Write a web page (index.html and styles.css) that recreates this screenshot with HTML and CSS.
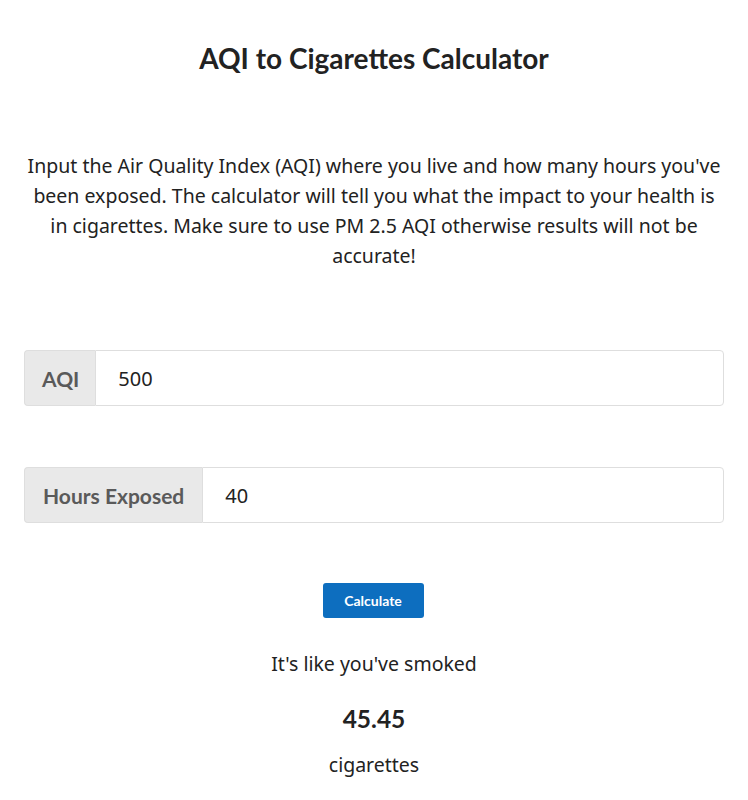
FILE: index.html
```html
<!DOCTYPE html>
<html>
<head>
<meta charset="utf-8">
<link rel="stylesheet" href="styles.css">
</head>
<body>
<main class="page">
  <h1 class="title">AQI to Cigarettes Calculator</h1>
  <p class="intro">Input the Air Quality Index (AQI) where you live and how many hours you've been exposed. The calculator will tell you what the impact to your health is in cigarettes. Make sure to use PM 2.5 AQI otherwise results will not be accurate!</p>
  <div class="group group-aqi">
    <span class="label label-aqi">AQI</span>
    <input class="field" type="text" value="500">
  </div>
  <div class="group group-hours">
    <span class="label">Hours Exposed</span>
    <input class="field" type="text" value="40">
  </div>
  <div class="actions">
    <button class="btn">Calculate</button>
  </div>
  <p class="result-lead">It's like you've smoked</p>
  <p class="result-num">45.45</p>
  <p class="result-unit">cigarettes</p>
</main>
</body>
</html>
```
FILE: styles.css
```css
html, body {
  margin: 0;
  padding: 0;
  background: #fff;
}
body {
  font-family: "Noto Sans", "Open Sans", sans-serif;
  color: #222;
}
.page {
  padding: 0 24px;
  display: flex;
  flex-direction: column;
}
.title {
  font-family: Lato, sans-serif;
  font-weight: 700;
  font-size: 28px;
  line-height: 32px;
  text-align: center;
  margin: 42px 0 0;
  color: #222;
}
.intro {
  font-size: 19.5px;
  line-height: 30px;
  text-align: center;
  margin: 77px 0 0;
}
.group {
  display: flex;
  height: 56px;
  border-radius: 4px;
}
.group-aqi { margin-top: 79px; }
.group-hours { margin-top: 61px; }
.label {
  display: flex;
  align-items: center;
  padding: 0 18px;
  background: #e9e9e9;
  border: 1px solid #dedede;
  border-right: none;
  border-radius: 4px 0 0 4px;
  font-family: Lato, sans-serif;
  font-weight: 700;
  font-size: 21px;
  color: #5a5a5a;
}
.label-aqi {
  padding: 0 16px 0 17px;
}
.field {
  flex: 1;
  min-width: 0;
  border: 1px solid #dedede;
  border-radius: 0 4px 4px 0;
  padding: 0 22px;
  font-family: "Noto Sans", sans-serif;
  font-size: 20px;
  color: #222;
  outline: none;
}
.actions {
  display: flex;
  justify-content: center;
  margin-top: 60px;
}
.btn {
  width: 101px;
  height: 35px;
  margin-right: 2px;
  background: #0d6ebf;
  border: none;
  border-radius: 3px;
  color: #fff;
  font-family: Lato, sans-serif;
  font-weight: 700;
  font-size: 14px;
}
.result-lead {
  font-size: 19.5px;
  text-align: center;
  margin: 34px 0 0;
  line-height: 24px;
}
.result-num {
  font-family: Lato, sans-serif;
  font-weight: 700;
  font-size: 24.5px;
  text-align: center;
  margin: 29px 0 0;
  line-height: 28px;
}
.result-unit {
  font-size: 19.5px;
  text-align: center;
  margin: 20px 0 0;
  line-height: 24px;
}
```
